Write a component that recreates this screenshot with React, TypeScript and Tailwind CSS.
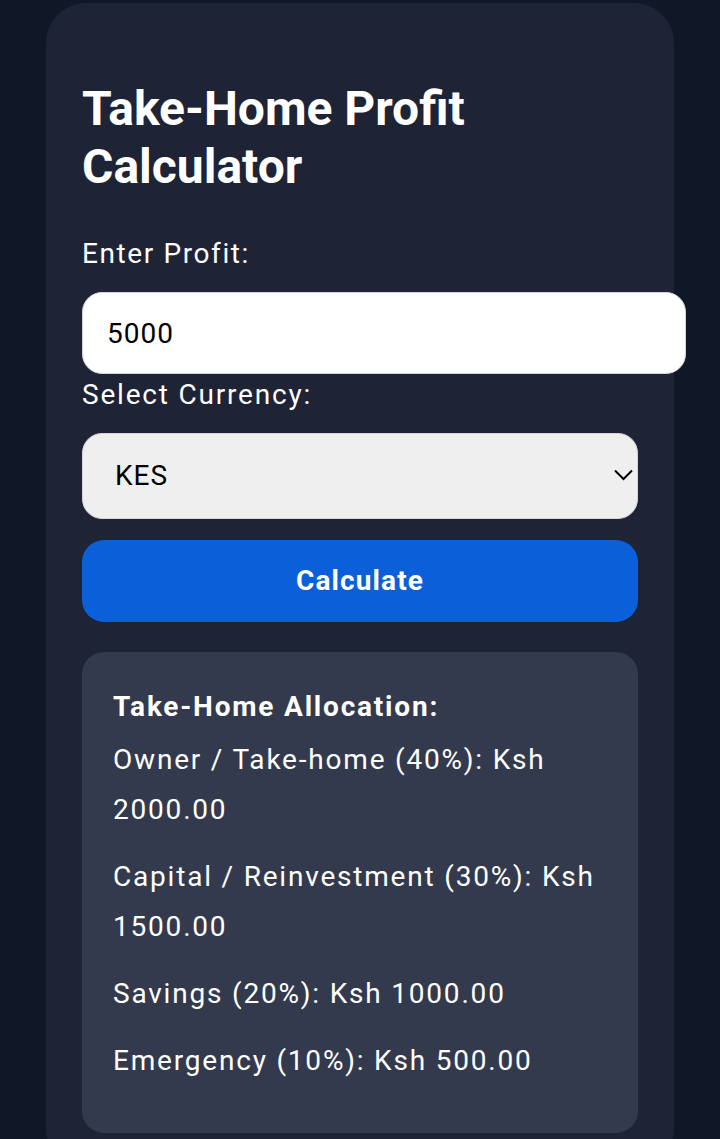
import { useState } from "react";

// Split the profit into the four take-home buckets
const ALLOCATIONS = [
  { label: "Owner / Take-home", pct: 40 },
  { label: "Capital / Reinvestment", pct: 30 },
  { label: "Savings", pct: 20 },
  { label: "Emergency", pct: 10 },
];

const SYMBOLS: Record<string, string> = { KES: "Ksh", USD: "$", EUR: "€" };

export default function App() {
  const [profit, setProfit] = useState("5000");
  const [currency, setCurrency] = useState("KES");
  const [result, setResult] = useState<number | null>(5000);

  const symbol = SYMBOLS[currency] ?? currency;

  return (
    <div
      className="min-h-screen bg-[#101828] pt-[3px]"
      style={{ fontFamily: "Roboto, 'Noto Sans', Arial, sans-serif" }}
    >
      {/* Card */}
      <div className="mx-auto w-[628px] rounded-[40px] bg-[#1e2336] px-[36px] pt-[77px] pb-[36px]">
        <h1 className="text-[48px] font-bold leading-[57.6px] text-white">
          Take-Home Profit
          <br />
          Calculator
        </h1>

        {/* Profit input */}
        <label className="mt-[42px] block text-[28px] leading-[33px] tracking-[1.6px] text-white">
          Enter Profit:
        </label>
        <input
          type="number"
          value={profit}
          onChange={(e) => setProfit(e.target.value)}
          className="mt-[22px] block h-[82px] w-[604px] rounded-[20px] border border-[#d4d4d8] bg-white px-[24px] text-[28px] tracking-[1px] text-black outline-none"
        />

        {/* Currency select */}
        <label className="mt-[4px] block text-[28px] leading-[33px] tracking-[1.8px] text-white">
          Select Currency:
        </label>
        <div className="relative mt-[22px]">
          <select
            value={currency}
            onChange={(e) => setCurrency(e.target.value)}
            className="block h-[86px] w-full appearance-none rounded-[20px] border border-[#d4d4d8] bg-[#efefef] pl-[32px] text-[28px] tracking-[1px] text-black outline-none"
          >
            <option value="KES">KES</option>
            <option value="USD">USD</option>
            <option value="EUR">EUR</option>
          </select>
          <svg
            width="19"
            height="12"
            viewBox="0 0 19 12"
            fill="none"
            stroke="black"
            strokeWidth="2"
            className="pointer-events-none absolute right-[5px] top-[36px]"
          >
            <polyline points="1,1.5 9.5,10 18,1.5" />
          </svg>
        </div>

        {/* Calculate */}
        <button
          onClick={() => setResult(parseFloat(profit) || 0)}
          className="mt-[21px] block h-[82px] w-full rounded-[22px] bg-[#0b5fd9] text-[28px] font-bold tracking-[1.1px] text-white"
        >
          Calculate
        </button>

        {/* Result box */}
        {result !== null && (
          <div className="mt-[30px] rounded-[22px] bg-[#343a4d] px-[31px] pt-[30px] pb-[30px] text-[28px] leading-[50px] tracking-[1.8px] text-white">
            <h3 className="mb-[3px] font-bold">Take-Home Allocation:</h3>
            {ALLOCATIONS.map((a) => (
              <p key={a.label} className="mb-[17px]">
                {a.label} ({a.pct}%): {symbol} {((result * a.pct) / 100).toFixed(2)}
              </p>
            ))}
          </div>
        )}
      </div>
    </div>
  );
}
